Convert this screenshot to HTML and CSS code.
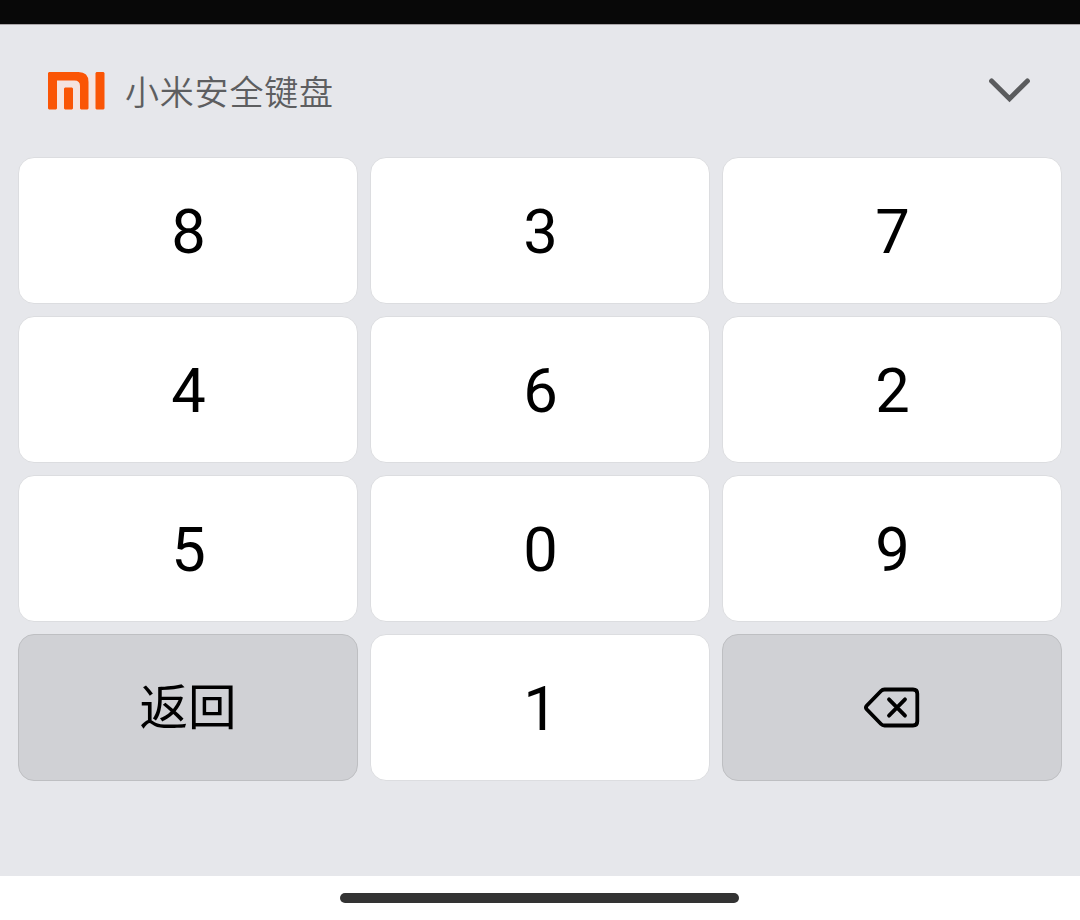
FILE: index.html
```html
<!DOCTYPE html>
<html lang="zh-CN">
<head>
<meta charset="utf-8">
<title>小米安全键盘</title>
<link rel="stylesheet" href="styles.css">
</head>
<body>
<div class="status-strip"></div>
<main class="keyboard">
  <header class="toolbar">
    <svg class="logo" viewBox="0 0 58 38" role="img" aria-label="MI">
      <path class="logo-gap" d="M8 7H33V38H8zM39 3H49V38H39z"/>
      <path class="logo-mark" d="M1 0H30.500Q40.500 0 40.500 10V36.500L39.500 37.500H33L32 36.500V14Q32 8.500 26.500 8.500H9V36.500L8 37.500H1L0 36.500V1zM17 15.500H24L25 16.500V36.500L24 37.500H17L16 36.500V16.500zM48.500 0H55.500L56.500 1V36.500L55.500 37.500H48.500L47.500 36.500V1z"/>
    </svg>
    <span class="title">小米安全键盘</span>
    <svg class="collapse" viewBox="0 0 42 26" aria-hidden="true"><path d="M2.600 3L20.500 20.700L38.400 3"/></svg>
  </header>
  <div class="keys">
    <button class="key">8</button>
    <button class="key">3</button>
    <button class="key">7</button>
    <button class="key">4</button>
    <button class="key">6</button>
    <button class="key">2</button>
    <button class="key">5</button>
    <button class="key">0</button>
    <button class="key">9</button>
    <button class="key key-action key-back">返回</button>
    <button class="key">1</button>
    <button class="key key-action" aria-label="删除">
      <svg class="backspace" viewBox="0 0 56 42"><path d="M20.500 2.500H49Q53.300 2.500 53.300 6.800V34.200Q53.300 38.500 49 38.500H20.500Q18.500 38.500 17 37L2.700 22.200Q1.200 20.500 2.700 18.800L17 4Q18.500 2.500 20.500 2.500z"/><path d="M25 12.300L41 28.700M41 12.300L25 28.700"/></svg>
    </button>
  </div>
</main>
<footer class="nav"><div class="handle"></div></footer>
</body>
</html>
```

FILE: styles.css
```css
* {
  box-sizing: border-box;
}

body {
  margin: 0;
  height: 920px;
  display: flex;
  flex-direction: column;
  background: #fff;
  overflow: hidden;
}

.status-strip {
  height: 25px;
  background: #080808;
  border-bottom: 1px solid #aaa6a9;
}

.keyboard {
  height: 851px;
  background: #e6e7eb;
}

.toolbar {
  height: 132px;
  display: flex;
  align-items: center;
  padding: 0 49px 0 48px;
}

.logo {
  width: 58px;
  height: 38px;
}

.logo-mark {
  fill: #fa5505;
}

.logo-gap {
  fill: #f4e3df;
}

.title {
  margin-left: 19px;
  font: 350 34px/48px "Noto Sans CJK SC", sans-serif;
  letter-spacing: 0.800px;
  color: #5d5e60;
}

.collapse {
  width: 42px;
  height: 26px;
  margin-left: auto;
  fill: none;
  stroke: #5b5c5e;
  stroke-width: 5;
  stroke-linecap: round;
}

.keys {
  display: grid;
  grid-template-columns: repeat(3, 340px);
  grid-auto-rows: 147px;
  gap: 12px;
  padding: 0 18px;
}

.key {
  display: flex;
  align-items: center;
  justify-content: center;
  padding: 3px 0 0 1px;
  border: 1px solid #dcdde0;
  border-radius: 16px;
  background: #fff;
  color: #000;
  font: 61.500px/72px Roboto, sans-serif;
}

.key-action {
  padding: 0;
  border-color: #bebfc2;
  background: #d0d1d5;
}

.key-back {
  padding-bottom: 8px;
  font: 400 48.500px/70px "Noto Sans CJK SC", sans-serif;
}

.backspace {
  width: 56px;
  height: 42px;
  fill: none;
  stroke: #000;
  stroke-width: 3.800;
  stroke-linecap: round;
}

.nav {
  height: 44px;
  display: flex;
  justify-content: center;
  align-items: center;
}

.handle {
  width: 399px;
  height: 10px;
  margin-right: 1px;
  border-radius: 5px;
  background: #333;
}
```
